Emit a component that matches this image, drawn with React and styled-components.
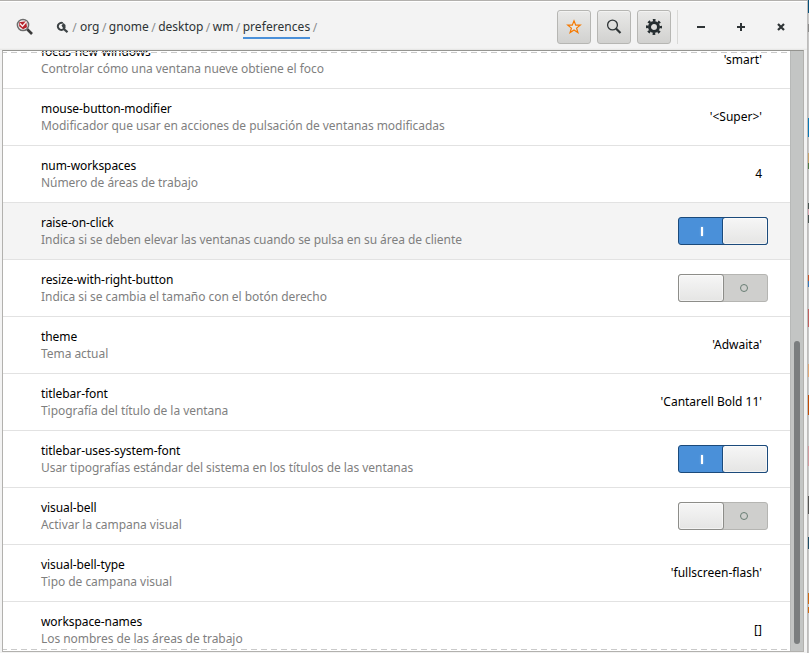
import React from 'react';
import styled, { createGlobalStyle, css } from 'styled-components';

const GlobalStyle = createGlobalStyle`
  *, *::before, *::after { box-sizing: border-box; }
  body { margin: 0; overflow: hidden; background: #d3d2d1; }
`;

const Screen = styled.div`
  display: flex;
  width: 809px;
  height: 653px;
  overflow: hidden;
  font: 12px/17px "Noto Sans", sans-serif;
  color: #000;
`;

const Window = styled.main`
  display: flex;
  flex: none;
  flex-direction: column;
  width: 808px;
  height: 653px;
  background: #f3f3f3;
  border-top: 1px solid #b2b0ad;
  border-right: 1px solid #bdbcbb;
`;

const Header = styled.header`
  display: flex;
  flex: none;
  align-items: center;
  height: 49px;
  padding: 3px 0 0 16px;
  background: linear-gradient(#fff 0 1px, #f3f3f3 1px 47px, #e4e4e3 49px);
`;

const Breadcrumb = styled.nav`
  display: flex;
  align-items: center;
  flex: 1;
  margin-left: 22px;
`;

const Slash = styled.span`
  width: ${(p) => (p.$first ? '11px' : '9.3px')};
  text-align: center;
  color: #8b8e8f;
`;

const Crumb = styled.span`
  height: 24px;
  padding-top: 3px;
  color: #2e3436;
  letter-spacing: ${(p) => (p.$current ? '0.06px' : 'normal')};
  border-bottom: 2px solid ${(p) => (p.$current ? '#4a90d9' : 'transparent')};
`;

const ToolButton = styled.button`
  display: grid;
  place-items: center;
  width: 34px;
  height: 34px;
  margin-right: 6px;
  padding: 0;
  border: 1px solid #b6b6b3;
  border-radius: 3px;
  background: linear-gradient(#e9e9e8, #d1d1cf);
  box-shadow: inset 0 1px #f3f3f2;
`;

const WindowControls = styled.div`
  display: flex;
  align-items: center;
  height: 34px;
  padding-left: 3px;
  padding-right: 6px;
  border-left: 1px solid #d9d9d7;
`;

const Control = styled.span`
  display: grid;
  place-items: center;
  width: 40px;
  height: 34px;
`;

const Body = styled.div`
  position: relative;
  display: flex;
  flex: none;
  width: 802px;
  height: 602px;
  margin-left: 2px;
  border: 1px solid #b2b1ae;
  border-top-color: #949490;
  overflow: hidden;
`;

const List = styled.ul`
  width: 787px;
  height: 646px;
  margin: -19px 0 0;
  padding: 0;
  list-style: none;
  background: #fff;
`;

const Row = styled.li`
  display: flex;
  align-items: center;
  justify-content: space-between;
  height: 57px;
  padding: 0 22px 0 38px;
  border-bottom: 1px solid #e2e2e2;
  background: ${(p) => (p.$hovered ? '#f4f4f4' : '#fff')};
`;

const Name = styled.div`
  color: #000;
  letter-spacing: -0.07px;
`;

const Summary = styled.div`
  color: #7f7f7f;
  letter-spacing: -0.05px;
`;

const Value = styled.span`
  margin: 0 6px 2px 0;
`;

const Switch = styled.div`
  display: flex;
  width: 90px;
  height: 28px;
  flex-direction: ${(p) => (p.$on ? 'row' : 'row-reverse')};
  border: 1px solid ${(p) => (p.$on ? '#1b4a7b' : '#b5b5b2')};
  border-radius: 3px;
  background: ${(p) => (p.$on ? '#4a90d9' : '#cfcfcd')};
`;

const SwitchMark = styled.span`
  display: grid;
  place-items: center;
  flex: 1;
`;

const OnBar = styled.span`
  width: 2px;
  height: 9px;
  margin-left: 1px;
  background: #fff;
  box-shadow: 0 0 2px #fff8;
`;

const OffRing = styled.span`
  width: 8px;
  height: 8px;
  margin-right: 3px;
  border: 1px solid #697e74;
  border-radius: 50%;
`;

const Knob = styled.span`
  flex: none;
  width: 46px;
  height: 28px;
  margin: -1px;
  border: 1px solid ${(p) => (p.$on ? '#1b4a7b' : '#8d8d89')};
  border-radius: 3px;
  background: linear-gradient(#f6f6f6, #e5e5e4);
  box-shadow: inset 0 0 0 1px #fff8;
`;

const Scrollbar = styled.div`
  width: 13px;
  height: 600px;
  padding: 290px 3px 7px 4px;
  background: #c3c5c4;
  border-left: 1px solid #b7b9b8;
`;

const Thumb = styled.div`
  height: 303px;
  width: 6px;
  margin-left: -1px;
  border-radius: 3px;
  background: #7b7e7f;
`;

const Undershoot = styled.div`
  position: absolute;
  left: 0;
  ${(p) => (p.$bottom ? css`bottom: 1px;` : css`top: 1px;`)}
  width: 787px;
  height: 1px;
  background: repeating-linear-gradient(90deg, #cacaca 0 4px, #fff 4px 8px, #cacaca 8px 10px);
`;

const Desktop = styled.div`
  flex: none;
  width: 1px;
  height: 653px;
  background: linear-gradient(
    #06507a 0 13px, #c7c7c7 13px 24px, #8a8a8a 24px 32px, #c7c7c7 32px 118px,
    #0a78b5 118px 137px, #c7c7c7 137px 153px, #c9a36c 153px 163px, #4f7a45 163px 169px,
    #c7c7c7 169px 203px, #4a5552 203px 209px, #d8a9b4 209px 215px, #4a5552 215px 223px,
    #c7c7c7 223px 275px, #c8552a 275px 281px, #3a78b8 281px 287px, #c7c7c7 287px 309px,
    #c06060 309px 327px, #c7c7c7 327px 364px, #e0a878 364px 377px, #c7c7c7 377px 395px,
    #c04a04 395px 415px, #c7c7c7 415px 446px, #d29aa0 446px 466px, #c7c7c7 466px 496px,
    #555 496px 514px, #c7c7c7 514px 537px, #1f4d66 537px 549px, #c7c7c7 549px 593px,
    #cf6a14 593px 604px, #c7c7c7 604px 607px, #cf6a14 607px 613px, #c7c7c7 613px
  );
`;

const AppIcon = () => (
  <svg width="18" height="18" viewBox="0 0 18 18">
    <path d="M11 11l5 5" stroke="#3a3a3a" strokeWidth="2.600" />
    <circle cx="7" cy="7" r="5.600" fill="#eee" stroke="#6d6d6d" strokeWidth="1.500" />
    <path d="M3.200 4.200l7-1 .8 6-4 2-3.800-3z" fill="#b5222a" />
    <path d="M4 5.500l2.500 2.800L10.500 3.500" fill="none" stroke="#f6eaea" strokeWidth="1.400" />
  </svg>
);

const RootIcon = () => (
  <svg width="13" height="13" viewBox="0 0 13 13">
    <path d="M7.800 8l3.700 3.200" stroke="#3c4244" strokeWidth="2.200" />
    <path d="M6.800 2.200A3.500 3.500 0 1 0 8.600 6.600" fill="none" stroke="#3c4244" strokeWidth="2" />
    <path d="M5.500 4.500l2-2.500 2 2v3H7z" fill="#3c4244" />
  </svg>
);

const StarIcon = () => (
  <svg width="16" height="16" viewBox="0 0 16 16">
    <path d="M8 1.800L9.700 6.200h4.500l-3.600 2.900 1.300 4.500L8 11l-3.900 2.600 1.300-4.500-3.600-2.900h4.500z" fill="#fff4" stroke="#f57900" strokeWidth="1.200" />
  </svg>
);

const SearchIcon = () => (
  <svg width="16" height="16" viewBox="0 0 16 16" fill="none" stroke="#2e3436">
    <circle cx="6.500" cy="6" r="4.900" strokeWidth="1.300" />
    <path d="M10 9.500l4.500 4.500" strokeWidth="2.200" />
  </svg>
);

const GearIcon = () => (
  <svg width="16" height="16" viewBox="0 0 16 16" fill="none" stroke="#252d30">
    <circle cx="8" cy="8" r="4.500" strokeWidth="3" />
    <circle cx="8" cy="8" r="6.800" strokeWidth="2.400" strokeDasharray="2.670 2.670" strokeDashoffset="1.335" />
  </svg>
);

const settings = [
  { name: 'focus-new-windows', summary: 'Controlar cómo una ventana nueve obtiene el foco', value: "'smart'" },
  { name: 'mouse-button-modifier', summary: 'Modificador que usar en acciones de pulsación de ventanas modificadas', value: "'<Super>'" },
  { name: 'num-workspaces', summary: 'Número de áreas de trabajo', value: '4' },
  { name: 'raise-on-click', summary: 'Indica si se deben elevar las ventanas cuando se pulsa en su área de cliente', value: true, hovered: true },
  { name: 'resize-with-right-button', summary: 'Indica si se cambia el tamaño con el botón derecho', value: false },
  { name: 'theme', summary: 'Tema actual', value: "'Adwaita'" },
  { name: 'titlebar-font', summary: 'Tipografía del título de la ventana', value: "'Cantarell Bold 11'" },
  { name: 'titlebar-uses-system-font', summary: 'Usar tipografías estándar del sistema en los títulos de las ventanas', value: true },
  { name: 'visual-bell', summary: 'Activar la campana visual', value: false },
  { name: 'visual-bell-type', summary: 'Tipo de campana visual', value: "'fullscreen-flash'" },
  { name: 'workspace-names', summary: 'Los nombres de las áreas de trabajo', value: '[]' },
];

const path = ['org', 'gnome', 'desktop', 'wm', 'preferences'];

function Toggle({ on }) {
  return (
    <Switch $on={on} role="switch" aria-checked={on}>
      <SwitchMark>{on ? <OnBar /> : <OffRing />}</SwitchMark>
      <Knob $on={on} />
    </Switch>
  );
}

export default function App() {
  return (
    <Screen>
      <GlobalStyle />
      <Window>
        <Header>
          <AppIcon />
          <Breadcrumb>
            <RootIcon />
            <Slash $first>/</Slash>
            {path.map((part, i) => (
              <React.Fragment key={part}>
                <Crumb $current={i === path.length - 1}>{part}</Crumb>
                <Slash>/</Slash>
              </React.Fragment>
            ))}
          </Breadcrumb>
          <ToolButton><StarIcon /></ToolButton>
          <ToolButton><SearchIcon /></ToolButton>
          <ToolButton><GearIcon /></ToolButton>
          <WindowControls>
            <Control><svg width="8" height="8"><path d="M0 4h8" stroke="#2e3436" strokeWidth="2" /></svg></Control>
            <Control><svg width="8" height="8"><path d="M0 4h8M4 0v8" stroke="#2e3436" strokeWidth="2" /></svg></Control>
            <Control><svg width="8" height="8"><path d="M1 1l6 6M7 1l-6 6" stroke="#2e3436" strokeWidth="2.200" /></svg></Control>
          </WindowControls>
        </Header>
        <Body>
          <List>
            {settings.map((s) => (
              <Row key={s.name} $hovered={s.hovered}>
                <div>
                  <Name>{s.name}</Name>
                  <Summary>{s.summary}</Summary>
                </div>
                {typeof s.value === 'boolean' ? <Toggle on={s.value} /> : <Value>{s.value}</Value>}
              </Row>
            ))}
          </List>
          <Scrollbar><Thumb /></Scrollbar>
          <Undershoot />
          <Undershoot $bottom />
        </Body>
      </Window>
      <Desktop />
    </Screen>
  );
}
